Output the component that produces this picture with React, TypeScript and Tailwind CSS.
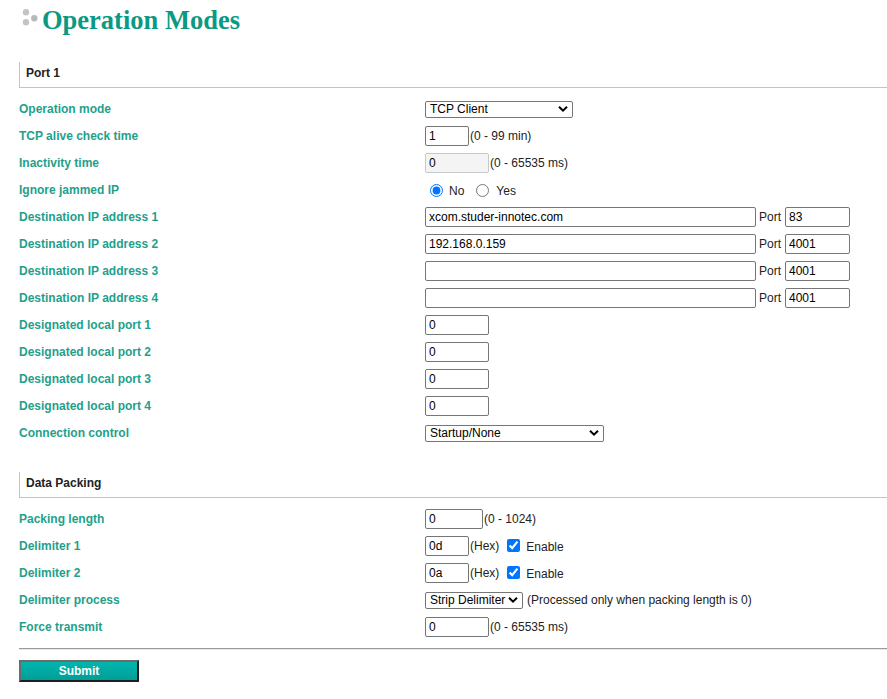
import type { ReactNode } from 'react'

const labelCls = "w-[406px] shrink-0 font-bold text-[#1fa08b]"
const inputCls = "h-[20px] border border-[#767676] rounded-[2px] bg-white px-[3px] text-[12px] text-black outline-none"

function Chevron() {
  return (
    <svg width="10" height="7" viewBox="0 0 10 7" className="pointer-events-none absolute right-[5px] top-1/2 -translate-y-1/2">
      <path d="M1 1.2 L5 5.2 L9 1.2" fill="none" stroke="#000" strokeWidth="2" />
    </svg>
  )
}

function Select({ value, className }: { value: string; className: string }) {
  return (
    <div className={`relative h-[17px] ${className}`}>
      <select
        defaultValue={value}
        className="h-full w-full appearance-none border border-[#767676] rounded-[2px] bg-white pl-[4px] text-[12px] leading-[15px] text-black outline-none"
      >
        <option>{value}</option>
      </select>
      <Chevron />
    </div>
  )
}

function Row({ label, children }: { label: string; children: ReactNode }) {
  return (
    <div className="flex h-[27px] items-center">
      <div className={labelCls}>{label}</div>
      <div className="flex items-center">{children}</div>
    </div>
  )
}

function SectionHeader({ title }: { title: string }) {
  return (
    <div className="h-[26px] border-l border-b border-[#c4c4c4] pl-[6px] pt-[3px] font-bold leading-[16px] text-[#222]">
      {title}
    </div>
  )
}

export default function App() {
  const destinations = [
    { ip: 'xcom.studer-innotec.com', port: '83' },
    { ip: '192.168.0.159', port: '4001' },
    { ip: '', port: '4001' },
    { ip: '', port: '4001' },
  ]

  return (
    <div className="min-h-[699px] bg-white pl-[19px] font-['Liberation_Sans',Arial,sans-serif] text-[12px] text-[#222]">
      {/* Titre */}
      <div className="h-[62px]">
        <h1 className="flex items-start pt-[4px]">
          <svg width="16" height="17" viewBox="0 0 16 17" className="ml-[3px] mt-[5px]">
            <circle cx="4" cy="3.3" r="3.2" fill="#c4c4c4" />
            <circle cx="4" cy="13.3" r="3.2" fill="#c4c4c4" />
            <circle cx="12.3" cy="9.3" r="3.2" fill="#b8b8b8" />
          </svg>
          <span className="ml-[4px] font-['Liberation_Serif','Times_New_Roman',serif] text-[26.5px] font-bold leading-[32px] text-[#0a9a84]">
            Operation Modes
          </span>
        </h1>
      </div>

      {/* Port 1 */}
      <SectionHeader title="Port 1" />
      <div className="pt-[7px]">
        <Row label="Operation mode">
          <Select value="TCP Client" className="w-[148px]" />
        </Row>
        <Row label="TCP alive check time">
          <input defaultValue="1" className={`${inputCls} w-[44px]`} />
          <span className="ml-[1px]">(0 - 99 min)</span>
        </Row>
        <Row label="Inactivity time">
          <input defaultValue="0" className="h-[20px] w-[64px] border border-[#c8c8c8] rounded-[2px] bg-[#f4f4f4] px-[3px] text-[12px] text-black outline-none" />
          <span className="ml-[1px]">(0 - 65535 ms)</span>
        </Row>
        <Row label="Ignore jammed IP">
          <input type="radio" name="jam" defaultChecked className="ml-[5px] mt-[2px] h-[13px] w-[13px]" />
          <span className="ml-[6px] mt-[2px]">No</span>
          <input type="radio" name="jam" className="ml-[12px] mt-[2px] h-[13px] w-[13px]" />
          <span className="ml-[7px] mt-[2px]">Yes</span>
        </Row>
        {destinations.map((d, i) => (
          <Row key={i} label={`Destination IP address ${i + 1}`}>
            <input defaultValue={d.ip} className={`${inputCls} w-[331px]`} />
            <span className="ml-[3px]">Port</span>
            <input defaultValue={d.port} className={`${inputCls} ml-[4px] w-[65px]`} />
          </Row>
        ))}
        {[1, 2, 3, 4].map(n => (
          <Row key={n} label={`Designated local port ${n}`}>
            <input defaultValue="0" className={`${inputCls} w-[64px]`} />
          </Row>
        ))}
        <Row label="Connection control">
          <Select value="Startup/None" className="w-[179px]" />
        </Row>
      </div>

      {/* Data Packing */}
      <div className="mt-[26px]">
        <SectionHeader title="Data Packing" />
      </div>
      <div className="pt-[7px]">
        <Row label="Packing length">
          <input defaultValue="0" className={`${inputCls} w-[58px]`} />
          <span className="ml-[1px]">(0 - 1024)</span>
        </Row>
        <Row label="Delimiter 1">
          <input defaultValue="0d" className={`${inputCls} w-[44px]`} />
          <span className="ml-[1px]">(Hex)</span>
          <input type="checkbox" defaultChecked className="ml-[8px] h-[13px] w-[13px]" />
          <span className="ml-[6px] mt-[2px]">Enable</span>
        </Row>
        <Row label="Delimiter 2">
          <input defaultValue="0a" className={`${inputCls} w-[44px]`} />
          <span className="ml-[1px]">(Hex)</span>
          <input type="checkbox" defaultChecked className="ml-[8px] h-[13px] w-[13px]" />
          <span className="ml-[6px] mt-[2px]">Enable</span>
        </Row>
        <Row label="Delimiter process">
          <Select value="Strip Delimiter" className="w-[98px]" />
          <span className="ml-[4px]">(Processed only when packing length is 0)</span>
        </Row>
        <Row label="Force transmit">
          <input defaultValue="0" className={`${inputCls} w-[64px]`} />
          <span className="ml-[1px]">(0 - 65535 ms)</span>
        </Row>
      </div>

      <div className="mt-[8px] border-t border-b border-t-[#9a9a9a] border-b-[#e8e8e8]" />

      <button className="mt-[10px] h-[22px] w-[120px] border-2 border-t-[#6b6b6b] border-l-[#6b6b6b] border-r-[#1e1e1e] border-b-[#1e1e1e] bg-gradient-to-b from-[#00b5ad] to-[#009e98] text-[12px] font-bold text-white">
        Submit
      </button>
    </div>
  )
}
